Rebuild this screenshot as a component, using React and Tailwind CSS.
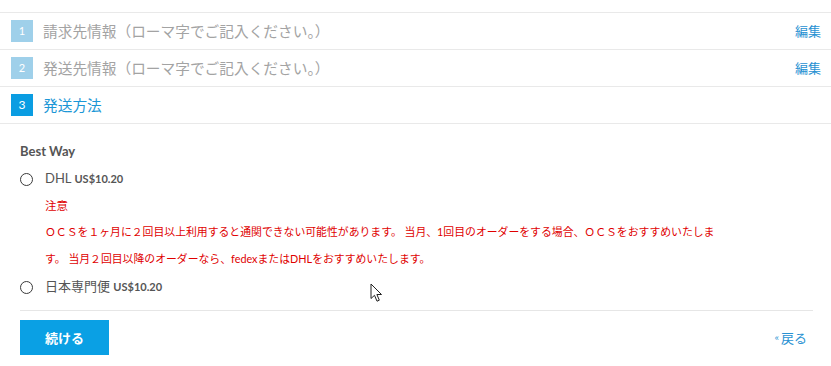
const jp = { fontFamily: '"Noto Sans CJK JP", "Noto Sans", sans-serif' };
const latin = { fontFamily: 'Lato, "Noto Sans CJK JP", sans-serif' };

const steps = [
  { n: 1, label: '請求先情報（ローマ字でご記入ください。）', done: true },
  { n: 2, label: '発送先情報（ローマ字でご記入ください。）', done: true },
  { n: 3, label: '発送方法', done: false },
];

const StepRow = ({ step }) => (
  <div className="h-[37px] border-b border-[#e9e9e9] flex items-center pl-[11px] pr-[10px]">
    <span
      className={
        step.done
          ? 'w-[22px] h-[22px] flex items-center justify-center text-white text-[11px] bg-[#9fd0ea]'
          : 'w-[22px] h-[22px] flex items-center justify-center text-white text-[12px] bg-[#0a9de2]'
      }
      style={latin}
    >
      {step.n}
    </span>
    <span
      className={step.done ? 'ml-[10px] text-[14.7px] text-[#a3a3a3]' : 'ml-[10px] text-[14.7px] text-[#1c97d6]'}
      style={jp}
    >
      {step.label}
    </span>
    {step.done && (
      <span className="ml-auto text-[13px] text-[#2891d2]" style={jp}>
        編集
      </span>
    )}
  </div>
);

const Radio = () => (
  <span className="w-[13px] h-[13px] rounded-full border-[1.4px] border-[#3a3a3a] bg-white shrink-0" />
);

const Cursor = () => (
  <svg className="absolute left-[370px] top-[283px]" width="14" height="20" viewBox="0 0 14 20">
    <path d="M1 1 L1 15.5 L4.5 12.3 L7 18.2 L9.3 17.2 L6.9 11.5 L11.5 11.5 Z" fill="#fff" stroke="#222" strokeWidth="1" strokeLinejoin="round" />
  </svg>
);

export default function App() {
  return (
    <div className="relative w-[831px] h-[366px] bg-white pt-[12px] overflow-hidden">
      <div className="border-t border-[#e9e9e9]">
        {steps.map((s) => (
          <StepRow key={s.n} step={s} />
        ))}
      </div>

      <div className="pl-[20px] pr-[18px] pt-[18px]">
        <div className="h-[18px] leading-[18px] text-[13px] font-bold text-[#555]" style={latin}>
          Best Way
        </div>

        <div className="mt-[6px] h-[26px] flex items-center">
          <Radio />
          <span className="ml-[12px] text-[13px] text-[#555]" style={latin}>
            DHL <b className="text-[11px] text-[#555]">US$10.20</b>
          </span>
        </div>

        <div className="pl-[25px] text-[#e00000]" style={latin}>
          <div className="h-[26px] leading-[26px] text-[11.5px]" style={jp}>注意</div>
          <p className="w-[670px] leading-[27px] text-[10.85px]">
            ＯＣＳを１ヶ月に２回目以上利用すると通関できない可能性があります。 当月、1回目のオーダーをする場合、ＯＣＳをおすすめいたします。 当月２回目以降のオーダーなら、fedexまたはDHLをおすすめいたします。
          </p>
        </div>

        <div className="mt-[2px] h-[26px] flex items-center">
          <Radio />
          <span className="ml-[12px] text-[13px] text-[#555]" style={latin}>
            日本専門便 <b className="text-[11px] text-[#555]">US$10.20</b>
          </span>
        </div>

        <div className="mt-[10px] border-t border-[#e6e6e6]" />

        <div className="mt-[9px] flex items-center justify-between pr-[6px]">
          <button
            className="w-[89px] h-[35px] bg-[#0aa0e4] text-white text-[13px] font-bold flex items-center justify-center"
            style={jp}
          >
            続ける
          </button>
          <span className="flex items-center text-[#2891d2]" style={jp}>
            <span className="text-[9px] mr-[2px]">«</span>
            <span className="text-[13px]">戻る</span>
          </span>
        </div>
      </div>

      <Cursor />
    </div>
  );
}
